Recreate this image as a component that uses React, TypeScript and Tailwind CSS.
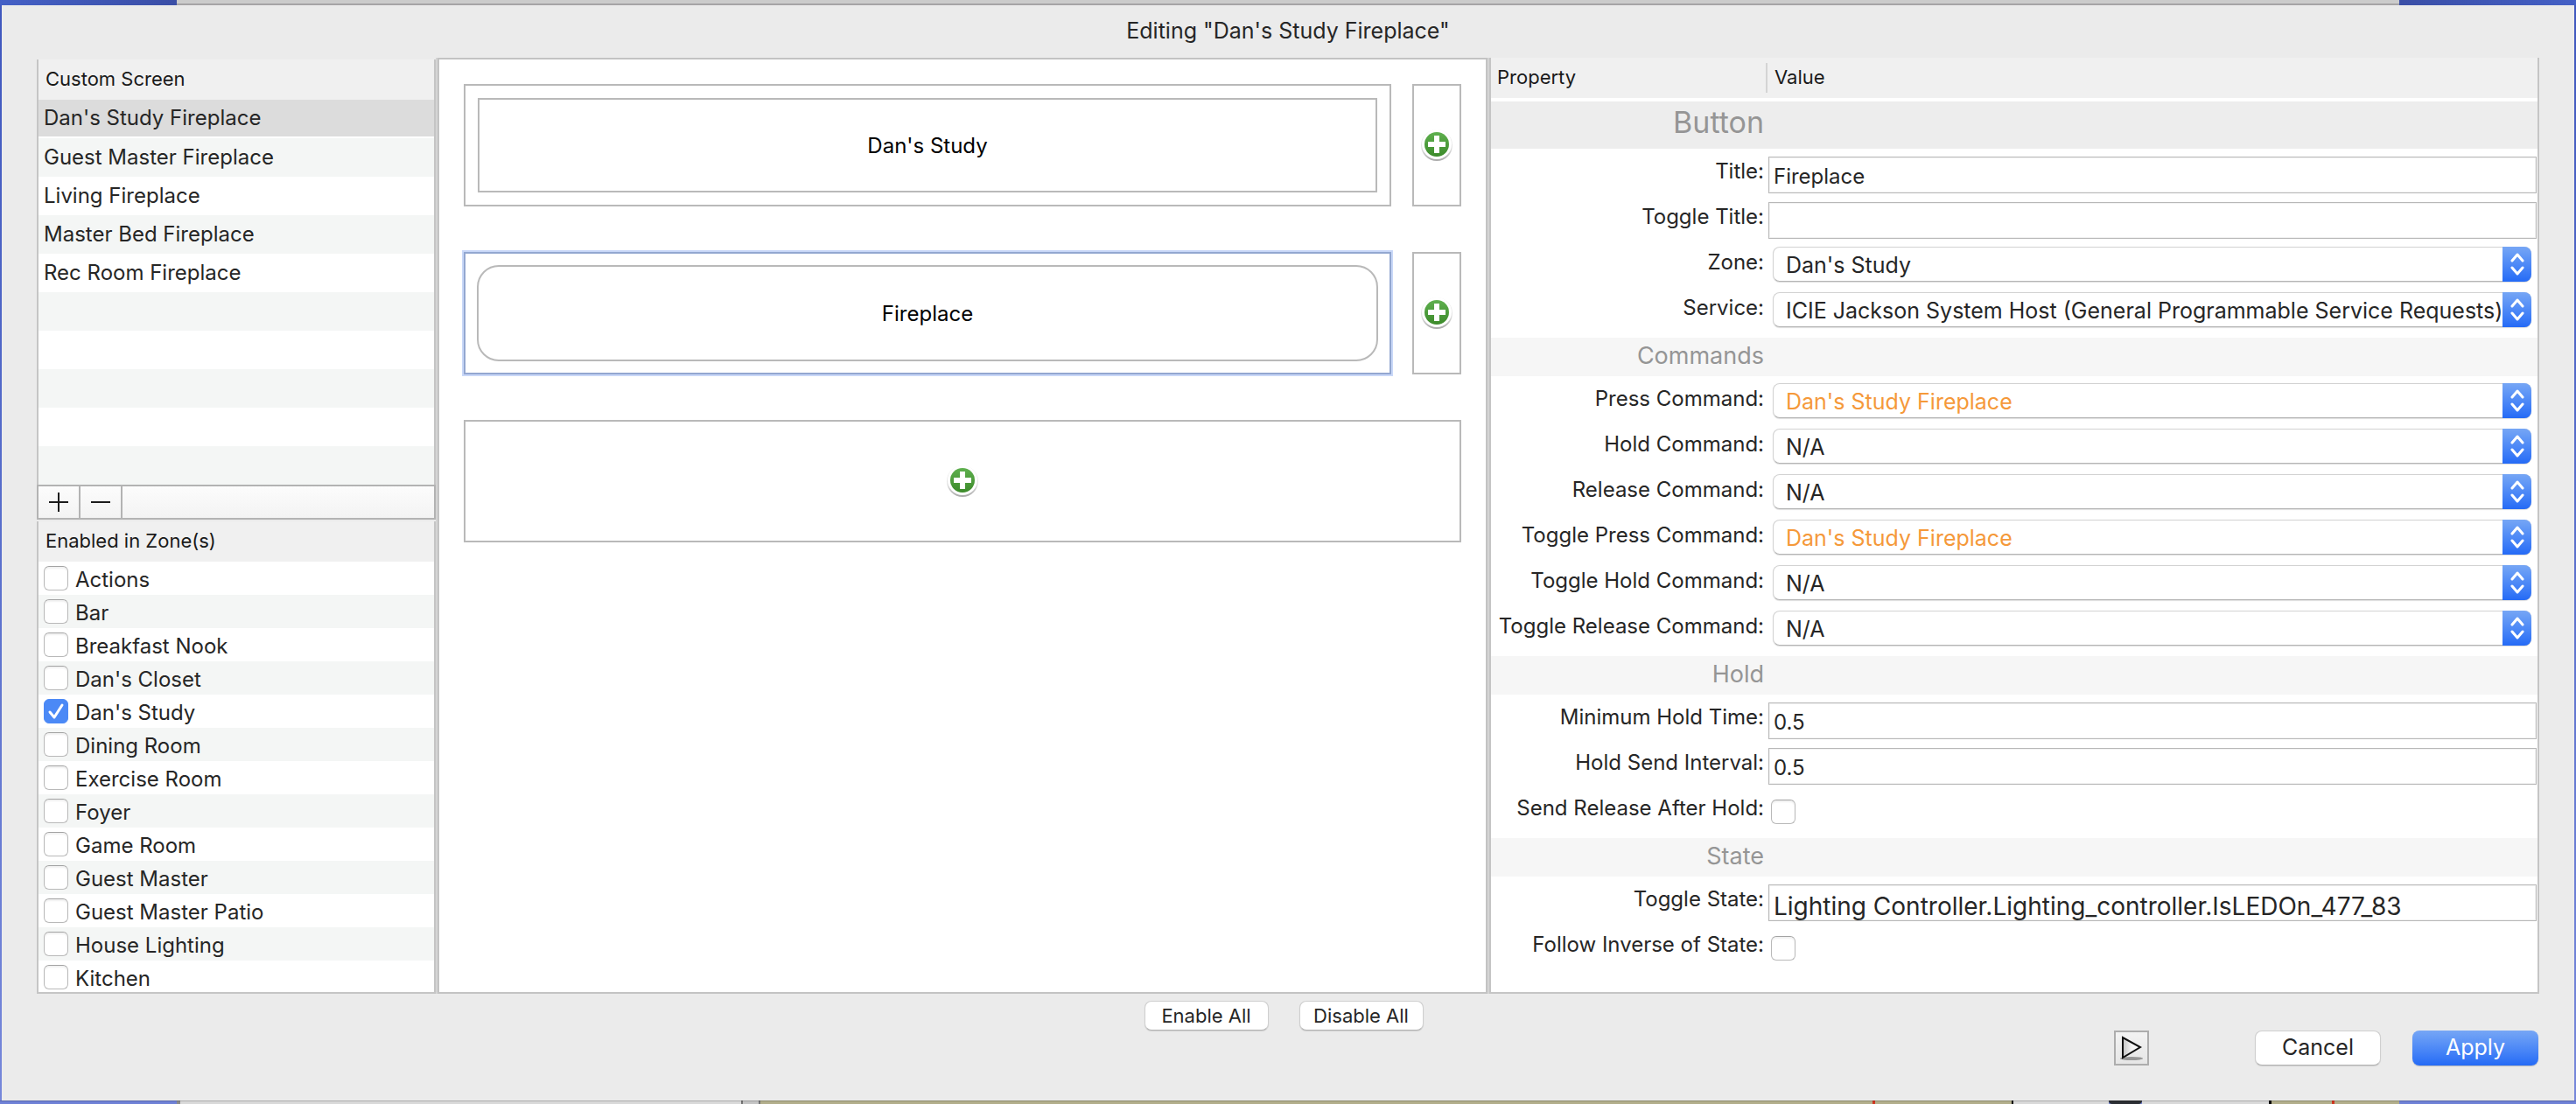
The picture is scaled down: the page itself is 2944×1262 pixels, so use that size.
import { useState, type ReactNode } from "react";

const SCREENS = [
  "Dan's Study Fireplace",
  "Guest Master Fireplace",
  "Living Fireplace",
  "Master Bed Fireplace",
  "Rec Room Fireplace",
];

const ZONES = [
  "Actions",
  "Bar",
  "Breakfast Nook",
  "Dan's Closet",
  "Dan's Study",
  "Dining Room",
  "Exercise Room",
  "Foyer",
  "Game Room",
  "Guest Master",
  "Guest Master Patio",
  "House Lighting",
  "Kitchen",
];

function AddIcon() {
  return (
    <svg width="40" height="40" viewBox="0 0 40 40" aria-hidden="true">
      <defs>
        <linearGradient id="add-green" x1="0" y1="0" x2="0" y2="1">
          <stop offset="0" stopColor="#5fb04f" />
          <stop offset="1" stopColor="#3c8a2a" />
        </linearGradient>
        <linearGradient id="add-rim" x1="0" y1="0" x2="0" y2="1">
          <stop offset="0" stopColor="#f6f6f6" />
          <stop offset="0.6" stopColor="#e2e2e2" />
          <stop offset="1" stopColor="#a8a8a8" />
        </linearGradient>
      </defs>
      <circle cx="20" cy="20" r="18" fill="url(#add-rim)" />
      <circle cx="20" cy="19" r="17" fill="#fff" />
      <circle cx="20" cy="19" r="14" fill="url(#add-green)" />
      <path d="M17 9h6v7h7v6h-7v7h-6v-7h-7v-6h7z" fill="#fff" />
    </svg>
  );
}

function Stepper() {
  return (
    <span className="pointer-events-none absolute inset-y-0 right-0 flex w-[33px] items-center justify-center rounded-r-lg bg-linear-to-b from-[#76a6f5] to-[#246af6]">
      <svg width="16" height="26" viewBox="0 0 16 26" fill="none" stroke="#fff" strokeWidth="3" strokeLinecap="round" strokeLinejoin="round" aria-hidden="true">
        <path d="M2 9l6-7 6 7M2 17l6 7 6-7" />
      </svg>
    </span>
  );
}

function Check({ id, defaultChecked }: { id: string; defaultChecked?: boolean }) {
  return (
    <span className="relative block size-7 shrink-0">
      <input
        id={id}
        type="checkbox"
        defaultChecked={defaultChecked}
        className="peer block size-7 appearance-none rounded-md border border-[#b9b9b9] border-t-[#a3a3a3] bg-white shadow-[inset_0_2px_2px_#0000000f] checked:border-[#4b89f6] checked:bg-[#4b89f6] checked:shadow-none"
      />
      <svg viewBox="0 0 28 28" className="pointer-events-none absolute inset-0 hidden size-7 peer-checked:block" fill="none" stroke="#fff" strokeWidth="3" strokeLinecap="round" strokeLinejoin="round" aria-hidden="true">
        <path d="M7 15l5 6 9-14" />
      </svg>
    </span>
  );
}

function Section({ children }: { children: ReactNode }) {
  return (
    <div className="flex h-11 items-center bg-[#f6f6f6] pb-0.5">
      <h3 className="w-[312px] text-right text-[27px] text-[#959595]">{children}</h3>
    </div>
  );
}

function Row({ id, label, children }: { id: string; label: string; children: ReactNode }) {
  return (
    <div className="flex h-[52px]">
      <label htmlFor={id} className="w-[312px] shrink-0 whitespace-nowrap pt-[5px] text-right text-[24px] leading-[34px]">
        {label}
      </label>
      <div className="flex min-w-0 flex-1">{children}</div>
    </div>
  );
}

function TextRow({ id, label, value, large }: { id: string; label: string; value: string; large?: boolean }) {
  return (
    <Row id={id} label={label}>
      <input
        id={id}
        type="text"
        defaultValue={value}
        className={
          "mt-[5px] mr-px ml-[5px] h-[42px] min-w-0 flex-1 border border-[#b8b8b8] bg-white pl-[5px] shadow-[inset_0_0_0_1px_#f2f2f2] " +
          (large ? "pt-2 text-[28px]" : "pt-0.5 text-[24px]")
        }
      />
    </Row>
  );
}

function SelectRow({ id, label, value, accent }: { id: string; label: string; value: string; accent?: boolean }) {
  return (
    <Row id={id} label={label}>
      <div className="relative mt-1 mr-[7px] ml-[10px] h-10 min-w-0 flex-1">
        <select
          id={id}
          defaultValue={value}
          className={
            "block h-10 w-full appearance-none rounded-lg border border-[#d2d2d2] border-b-[#b4b4b4] bg-white pt-0.5 pl-3.5 text-[25px] shadow-[0_1px_1px_#00000022] " +
            (accent ? "text-[#f5993a]" : "text-[#262626]")
          }
        >
          <option>{value}</option>
        </select>
        <Stepper />
      </div>
    </Row>
  );
}

function CheckRow({ id, label }: { id: string; label: string }) {
  return (
    <Row id={id} label={label}>
      <div className="mt-3 ml-2">
        <Check id={id} />
      </div>
    </Row>
  );
}

function AddCell({ wide }: { wide?: boolean }) {
  return (
    <button
      aria-label={wide ? "Add row" : "Add item to row"}
      className={
        "flex h-[140px] shrink-0 items-center justify-center border-2 border-[#b9b9b9] " + (wide ? "w-full" : "w-14")
      }
    >
      <AddIcon />
    </button>
  );
}

const pushButton =
  "rounded-lg border border-[#cfcfcf] border-b-[#b2b2b2] bg-white shadow-[0_1px_1px_#0000001f]";

export default function App() {
  const [selected, setSelected] = useState(0);

  return (
    <div className="flex h-screen flex-col bg-linear-to-b from-[#3f57be] to-[#7687da] font-['Inter','Liberation_Sans',sans-serif] text-[#262626]">
      {/* Windows showing behind the top edge of the sheet */}
      <div className="flex h-1.5 shrink-0">
        <div className="w-[202px] bg-linear-to-r from-[#4460c6] to-[#3a4ea6]" />
        <div className="flex-1 border-b-2 border-[#a6a4a6] bg-[#cbcbcb]" />
        <div className="w-[202px] bg-linear-to-r from-[#3a4ea6] to-[#4460c6]" />
      </div>

      <div className="mx-0.5 flex min-h-0 flex-1 flex-col bg-[#ebebeb] px-10">
        <h1 className="flex h-[60px] shrink-0 items-center justify-center text-[25px]">
          Editing "Dan's Study Fireplace"
        </h1>

        <main className="grid min-h-0 flex-1 grid-cols-[456px_2px_minmax(0,1fr)_2px_minmax(0,1fr)] grid-rows-[minmax(0,1fr)]">
          {/* Screens and zones */}
          <aside className="flex flex-col pt-0.5">
            <section className="border-x-2 border-[#c5c5c5] bg-white">
              <h2 className="flex h-[46px] items-center bg-[#f0f0f0] pb-0.5 pl-2 text-[22px] text-[#1a1a1a]">
                Custom Screen
              </h2>
              <ul className="text-[24px]">
                {SCREENS.map((name, i) => (
                  <li key={name} className="h-11 even:bg-[#f4f6f5]">
                    <button
                      onClick={() => setSelected(i)}
                      className={
                        "block w-full pl-1.5 text-left " +
                        (i === selected ? "h-[42px] bg-[#dcdcdc]" : "h-11")
                      }
                    >
                      {name}
                    </button>
                  </li>
                ))}
                {[0, 1, 2, 3, 4].map((i) => (
                  <li key={i} className="h-11 even:bg-[#f4f6f5]" />
                ))}
              </ul>
            </section>
            <div className="flex h-10 shrink-0 border-2 border-[#b3b3b3] bg-linear-to-b from-[#fcfcfc] to-[#f3f3f3]">
              <button aria-label="Add screen" className="flex w-12 items-center justify-center border-r-2 border-[#b3b3b3]">
                <svg width="22" height="22" viewBox="0 0 22 22" stroke="#1c1c1c" strokeWidth="2" aria-hidden="true">
                  <path d="M0 11h22M11 0v22" />
                </svg>
              </button>
              <button aria-label="Remove screen" className="flex w-12 items-center justify-center border-r-2 border-[#b3b3b3]">
                <svg width="22" height="22" viewBox="0 0 22 22" stroke="#1c1c1c" strokeWidth="2" aria-hidden="true">
                  <path d="M0 11h22" />
                </svg>
              </button>
            </div>
            <section className="mt-0.5 flex min-h-0 flex-1 flex-col border-x-2 border-b-2 border-[#c5c5c5] bg-white">
              <h2 className="flex h-[46px] shrink-0 items-center bg-[#f0f0f0] pb-0.5 pl-2 text-[22px] text-[#1a1a1a]">
                Enabled in Zone(s)
              </h2>
              <ul className="min-h-0 flex-1 overflow-y-auto text-[24px] [scrollbar-width:none]">
                {ZONES.map((zone, i) => (
                  <li key={zone} className="flex h-[38px] items-center gap-2 pl-1.5 even:bg-[#f4f6f5]">
                    <Check id={"zone-" + i} defaultChecked={zone === "Dan's Study"} />
                    <label htmlFor={"zone-" + i} className="flex-1 pt-1">
                      {zone}
                    </label>
                  </li>
                ))}
              </ul>
            </section>
          </aside>

          <div className="bg-[#d4d4d4]" />

          {/* Screen layout */}
          <section className="flex flex-col gap-[52px] overflow-y-auto border-2 border-[#c3c3c3] bg-white p-7 text-[24px] text-black [scrollbar-width:none]">
            <div className="flex gap-6">
              <button className="h-[140px] min-w-0 flex-1 border-2 border-[#b9b9b9] p-3.5">
                <span className="flex h-full items-center justify-center border-2 border-[#b9b9b9] pt-0.5">Dan's Study</span>
              </button>
              <AddCell />
            </div>
            <div className="flex gap-6">
              <button className="h-[140px] min-w-0 flex-1 border-2 border-[#93a7d0] p-[13px] shadow-[0_0_0_2px_#c9d8f8]">
                <span className="flex h-full items-center justify-center rounded-[25px] border-2 border-[#b9b9b9] pt-0.5">
                  Fireplace
                </span>
              </button>
              <AddCell />
            </div>
            <AddCell wide />
          </section>

          <div className="bg-[#d4d4d4]" />

          {/* Properties of the selected button */}
          <section className="overflow-y-auto border-x-2 border-b-2 border-[#c5c5c5] bg-white [scrollbar-width:none]">
            <div className="flex h-[46px] items-center bg-[#f0f0f0] text-[22px] text-[#1a1a1a]">
              <h2 className="w-[314px] pb-0.5 pl-[7px]">Property</h2>
              <h2 className="h-[34px] border-l-2 border-[#d4d4d4] pt-0.5 pl-2 leading-7">Value</h2>
            </div>
            <div className="mt-1 flex h-[54px] items-center bg-[#ededed] pb-2">
              <h3 className="w-[312px] text-right text-[34px] text-[#959595]">Button</h3>
            </div>
            <div className="py-1">
              <TextRow id="title" label="Title:" value="Fireplace" />
              <TextRow id="toggle-title" label="Toggle Title:" value="" />
              <SelectRow id="zone" label="Zone:" value="Dan's Study" />
              <SelectRow
                id="service"
                label="Service:"
                value="ICIE Jackson System Host (General Programmable Service Requests)"
              />
            </div>
            <Section>Commands</Section>
            <div className="py-1">
              <SelectRow id="press" label="Press Command:" value="Dan's Study Fireplace" accent />
              <SelectRow id="hold" label="Hold Command:" value="N/A" />
              <SelectRow id="release" label="Release Command:" value="N/A" />
              <SelectRow id="toggle-press" label="Toggle Press Command:" value="Dan's Study Fireplace" accent />
              <SelectRow id="toggle-hold" label="Toggle Hold Command:" value="N/A" />
              <SelectRow id="toggle-release" label="Toggle Release Command:" value="N/A" />
            </div>
            <Section>Hold</Section>
            <div className="py-1">
              <TextRow id="min-hold" label="Minimum Hold Time:" value="0.5" />
              <TextRow id="hold-interval" label="Hold Send Interval:" value="0.5" />
              <CheckRow id="send-release" label="Send Release After Hold:" />
            </div>
            <Section>State</Section>
            <div className="pt-1">
              <TextRow
                id="toggle-state"
                label="Toggle State:"
                value="Lighting Controller.Lighting_controller.IsLEDOn_477_83"
                large
              />
              <CheckRow id="follow-inverse" label="Follow Inverse of State:" />
            </div>
          </section>
        </main>

        <footer className="shrink-0 pt-2 pb-10">
          <div className="flex justify-center gap-[35px] pr-2.5 text-[22px]">
            <button className={pushButton + " h-[34px] w-[142px] leading-8"}>Enable All</button>
            <button className={pushButton + " h-[34px] w-[142px] leading-8"}>Disable All</button>
          </div>
          <div className="flex items-center justify-end pr-px text-[25px]">
            <button
              aria-label="Run"
              className="mr-[121px] flex size-10 items-center justify-center border-2 border-[#adadad] bg-linear-to-b from-[#f3f3f3] to-[#e6e6e6]"
            >
              <svg width="36" height="36" viewBox="0 0 36 36" aria-hidden="true">
                <defs>
                  <linearGradient id="run-fill" x1="0" y1="0" x2="1" y2="0">
                    <stop offset="0" stopColor="#c2c2c2" />
                    <stop offset="0.5" stopColor="#f4f4f4" />
                    <stop offset="1" stopColor="#ffffff" />
                  </linearGradient>
                </defs>
                <ellipse cx="18" cy="30" rx="13" ry="2" fill="#000" fillOpacity="0.35" />
                <path d="M8 6v23l20-12z" fill="url(#run-fill)" stroke="#111" strokeWidth="2" />
              </svg>
            </button>
            <button className={pushButton + " mr-9 h-10 w-36"}>Cancel</button>
            <button className="h-10 w-36 rounded-lg bg-linear-to-b from-[#76a6f5] to-[#246af6] text-white shadow-[0_1px_1px_#00000033]">
              Apply
            </button>
          </div>
        </footer>
      </div>

      {/* Windows showing behind the bottom edge of the sheet */}
      <div className="flex h-1 shrink-0 *:border-t *:border-[#00000033]">
        <div className="w-[202px] bg-[#6f81d6]" />
        <div className="w-1 bg-[#8a8a8a]" />
        <div className="grow-[641] bg-[#d9d9d9]" />
        <div className="w-0.5 bg-[#747474]" />
        <div className="w-[18px] bg-[#c4c4c4]" />
        <div className="w-0.5 bg-[#747474]" />
        <div className="grow-[1271] bg-[#b2ae8b]" />
        <div className="w-[3px] bg-[#d0351f]" />
        <div className="grow-[156] bg-[#b2ae8b]" />
        <div className="w-0.5 bg-black" />
        <div className="grow-[109] bg-[#d9d9d9]" />
        <div className="w-[38px] rounded-b bg-[#2b2e33]" />
        <div className="grow-[145] bg-[#d9d9d9]" />
        <div className="w-[3px] bg-black" />
        <div className="grow-[69] bg-[#b2ae8b]" />
        <div className="w-[3px] bg-[#d0351f]" />
        <div className="grow-[74] bg-[#b2ae8b]" />
        <div className="w-[202px] bg-[#6f81d6]" />
      </div>
    </div>
  );
}
